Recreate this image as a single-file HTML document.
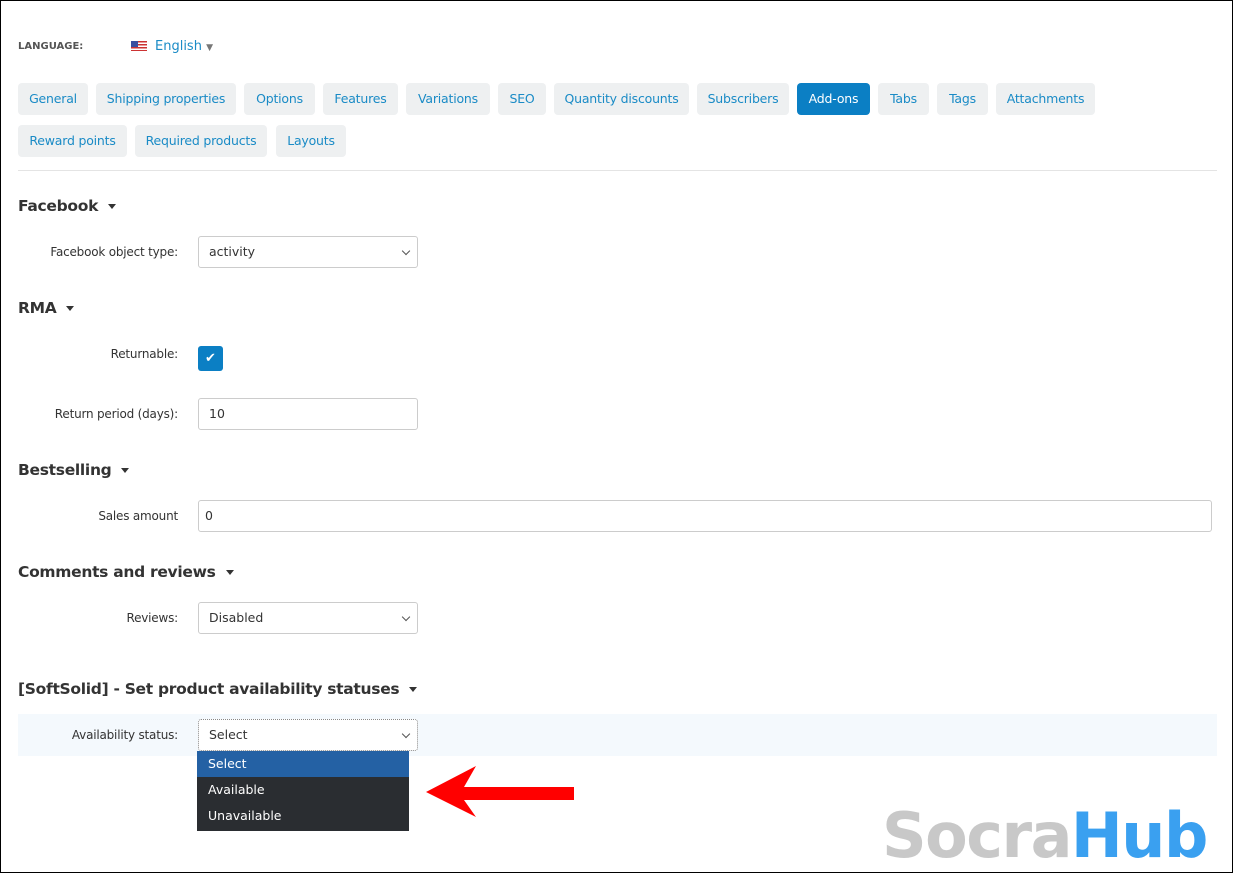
<!DOCTYPE html>
<html><head><meta charset="utf-8"><style>
*{box-sizing:border-box;margin:0;padding:0}
body{width:1233px;height:873px;background:#fff;font-family:"DejaVu Sans","Liberation Sans",sans-serif;position:relative;overflow:hidden;color:#333}
.a{position:absolute}
.tab{position:absolute;height:32px;background:#eef0f1;border-radius:4px;color:#1a8bc6;font-size:12.5px;line-height:32px;text-align:center;white-space:nowrap;letter-spacing:-0.2px}
.tab.on{background:#0b7fc4;color:#fff}
h3{position:absolute;left:18px;font-size:15.5px;font-weight:bold;color:#333;letter-spacing:-0.3px}
h3 i{display:inline-block;width:0;height:0;border-left:4px solid transparent;border-right:4px solid transparent;border-top:5px solid #333;margin-left:10px;vertical-align:middle}
.lbl{position:absolute;font-size:12px;color:#333;text-align:right;width:178px;left:0;letter-spacing:-0.2px}
.inp{position:absolute;left:198px;height:32px;border:1px solid #ccc;border-radius:3px;font-size:12.5px;line-height:30px;padding-left:10px;color:#333;background:#fff}
.sel::after{content:"";position:absolute;right:8px;top:11px;width:5px;height:5px;border-right:1.3px solid #555;border-bottom:1.3px solid #555;transform:rotate(45deg)}
</style></head><body>
<div class="a" style="left:0;top:0;width:1233px;height:873px;border:1px solid #000;z-index:5;pointer-events:none"></div>
<div class="a" style="left:18px;top:41px;font-size:10px;font-weight:bold;color:#555">LANGUAGE:</div>
<div class="a" style="left:131px;top:41px;width:16px;height:10px;background:repeating-linear-gradient(#c33 0 1.5px,#fff 1.5px 3px)"><div style="width:7px;height:6px;background:#3a4fa0"></div></div>
<div class="a" style="left:155px;top:39px;font-size:13px;color:#1a8bc6">English <span style="font-size:9px;color:#777">▼</span></div>

<div class="tab" style="left:18px;top:83px;width:70px">General</div>
<div class="tab" style="left:96px;top:83px;width:140px">Shipping properties</div>
<div class="tab" style="left:244px;top:83px;width:71px">Options</div>
<div class="tab" style="left:323px;top:83px;width:75px">Features</div>
<div class="tab" style="left:406px;top:83px;width:84px">Variations</div>
<div class="tab" style="left:498px;top:83px;width:48px">SEO</div>
<div class="tab" style="left:554px;top:83px;width:135px">Quantity discounts</div>
<div class="tab" style="left:697px;top:83px;width:92px">Subscribers</div>
<div class="tab on" style="left:797px;top:83px;width:73px">Add-ons</div>
<div class="tab" style="left:878px;top:83px;width:51px">Tabs</div>
<div class="tab" style="left:937px;top:83px;width:51px">Tags</div>
<div class="tab" style="left:996px;top:83px;width:99px">Attachments</div>
<div class="tab" style="left:18px;top:125px;width:109px">Reward points</div>
<div class="tab" style="left:135px;top:125px;width:132px">Required products</div>
<div class="tab" style="left:276px;top:125px;width:70px">Layouts</div>
<div class="a" style="left:18px;top:170px;width:1199px;height:1px;background:#e4e4e4"></div>

<h3 style="top:197px">Facebook<i></i></h3>
<div class="lbl" style="top:245px">Facebook object type:</div>
<div class="inp sel" style="top:236px;width:220px">activity</div>

<h3 style="top:299px">RMA<i></i></h3>
<div class="lbl" style="top:347px">Returnable:</div>
<div class="a" style="left:198px;top:346px;width:25px;height:25px;background:#0b7fc4;border-radius:3px;color:#fff;font-size:13px;line-height:25px;text-align:center">✔</div>
<div class="lbl" style="top:407px">Return period (days):</div>
<div class="inp" style="top:398px;width:220px">10</div>

<h3 style="top:461px">Bestselling<i></i></h3>
<div class="lbl" style="top:509px">Sales amount</div>
<div class="inp" style="top:500px;width:1014px;padding-left:6px">0</div>

<h3 style="top:563px">Comments and reviews<i></i></h3>
<div class="lbl" style="top:611px">Reviews:</div>
<div class="inp sel" style="top:602px;width:220px">Disabled</div>

<h3 style="top:680px">[SoftSolid] - Set product availability statuses<i></i></h3>
<div class="a" style="left:18px;top:714px;width:1199px;height:42px;background:#f4f9fd"></div>
<div class="lbl" style="top:728px">Availability status:</div>
<div class="inp sel" style="top:719px;width:220px;border:1px dotted #888">Select</div>
<div class="a" style="left:197px;top:751px;width:212px;height:80px;background:#2a2d31;font-size:12.5px;color:#fff">
<div style="height:26px;line-height:26px;padding-left:11px;background:#2461a4">Select</div>
<div style="height:26px;line-height:26px;padding-left:11px">Available</div>
<div style="height:26px;line-height:26px;padding-left:11px">Unavailable</div>
</div>
<svg class="a" style="left:426px;top:766px" width="150" height="52"><polygon points="0,26 50,0 38,21 148,21 148,34 38,34 50,51" fill="#f00"/></svg>
<div class="a" style="left:882px;top:796px;font-family:'DejaVu Sans',sans-serif;font-weight:bold;font-size:62px;letter-spacing:-1.5px;color:#c8c8c8;line-height:80px">Socra<span style="color:#3aa0f0">Hub</span></div>
</body></html>
